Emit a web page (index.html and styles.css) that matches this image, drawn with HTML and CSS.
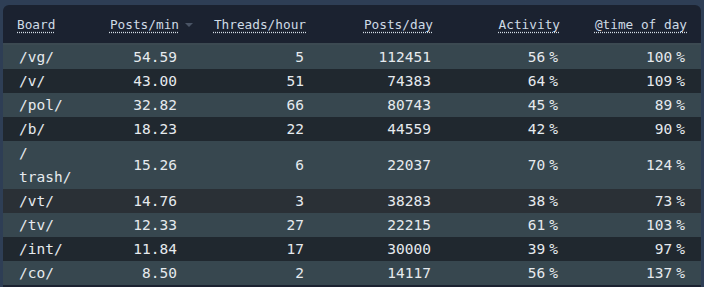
FILE: index.html
```
<!DOCTYPE html>
<html>
<head>
<meta charset="utf-8">
<link rel="stylesheet" href="styles.css">
</head>
<body>
<div class="frame">
<table class="stats">
<colgroup>
<col class="c-board"><col class="c-ppm"><col class="c-std"><col class="c-std"><col class="c-std"><col class="c-last">
</colgroup>
<thead>
<tr>
<th class="left"><span class="lbl">Board</span></th>
<th class="sorted"><span class="lbl">Posts/min</span><span class="arrow"></span></th>
<th><span class="lbl">Threads/hour</span></th>
<th><span class="lbl">Posts/day</span></th>
<th><span class="lbl">Activity</span></th>
<th><span class="lbl">@time of day</span></th>
</tr>
</thead>
<tbody>
<tr class="light"><td class="left">/vg/</td><td>54.59</td><td>5</td><td>112451</td><td>56<span class="pc">%</span></td><td>100<span class="pc">%</span></td></tr>
<tr class="dark"><td class="left">/v/</td><td>43.00</td><td>51</td><td>74383</td><td>64<span class="pc">%</span></td><td>109<span class="pc">%</span></td></tr>
<tr class="light"><td class="left">/pol/</td><td>32.82</td><td>66</td><td>80743</td><td>45<span class="pc">%</span></td><td>89<span class="pc">%</span></td></tr>
<tr class="dark"><td class="left">/b/</td><td>18.23</td><td>22</td><td>44559</td><td>42<span class="pc">%</span></td><td>90<span class="pc">%</span></td></tr>
<tr class="light"><td class="left">/<wbr>trash/</td><td>15.26</td><td>6</td><td>22037</td><td>70<span class="pc">%</span></td><td>124<span class="pc">%</span></td></tr>
<tr class="grey"><td class="left">/vt/</td><td>14.76</td><td>3</td><td>38283</td><td>38<span class="pc">%</span></td><td>73<span class="pc">%</span></td></tr>
<tr class="light"><td class="left">/tv/</td><td>12.33</td><td>27</td><td>22215</td><td>61<span class="pc">%</span></td><td>103<span class="pc">%</span></td></tr>
<tr class="dark"><td class="left">/int/</td><td>11.84</td><td>17</td><td>30000</td><td>39<span class="pc">%</span></td><td>97<span class="pc">%</span></td></tr>
<tr class="light"><td class="left">/co/</td><td>8.50</td><td>2</td><td>14117</td><td>56<span class="pc">%</span></td><td>137<span class="pc">%</span></td></tr>
</tbody>
</table>
</div>
</body>
</html>
```
FILE: styles.css
```
html, body {
  margin: 0;
  padding: 0;
  background: #2e3e55;
  height: 287px;
  overflow: hidden;
}
.frame {
  margin: 5px 3px 0 3px;
  background: #1b2230;
  border-radius: 6px 6px 0 0;
  padding-bottom: 4px;
  overflow: hidden;
}
.stats {
  width: 698px;
  table-layout: fixed;
  border-collapse: collapse;
  font-family: "DejaVu Sans Mono", "Liberation Mono", monospace;
  color: #e6eaee;
}
.c-board { width: 86px; }
.c-ppm { width: 104px; }
.c-std { width: 127px; }
.c-last { width: 127px; }
.stats th {
  height: 38px;
  padding: 0 14px;
  font-size: 12.75px;
  font-weight: normal;
  text-align: right;
  color: #cfdbe6;
  vertical-align: middle;
  border-bottom: 2px solid #3c4a52;
  position: relative;
  white-space: nowrap;
}
.stats th.left { text-align: left; }
.lbl {
  text-decoration: underline dotted #d6dfe8;
  text-underline-offset: 3px;
}
.arrow {
  position: absolute;
  right: 0;
  top: 18px;
  width: 0;
  height: 0;
  border-left: 4px solid transparent;
  border-right: 4px solid transparent;
  border-top: 4px solid #4a5465;
}
.stats td {
  padding: 0 16px;
  font-size: 14.5px;
  line-height: 24px;
  text-align: right;
  vertical-align: middle;
}
.stats td.left { text-align: left; }
.pc { margin-left: 4px; }
.light { background: #37474f; }
.dark { background: #20282f; }
.grey { background: #2a3036; }
```
